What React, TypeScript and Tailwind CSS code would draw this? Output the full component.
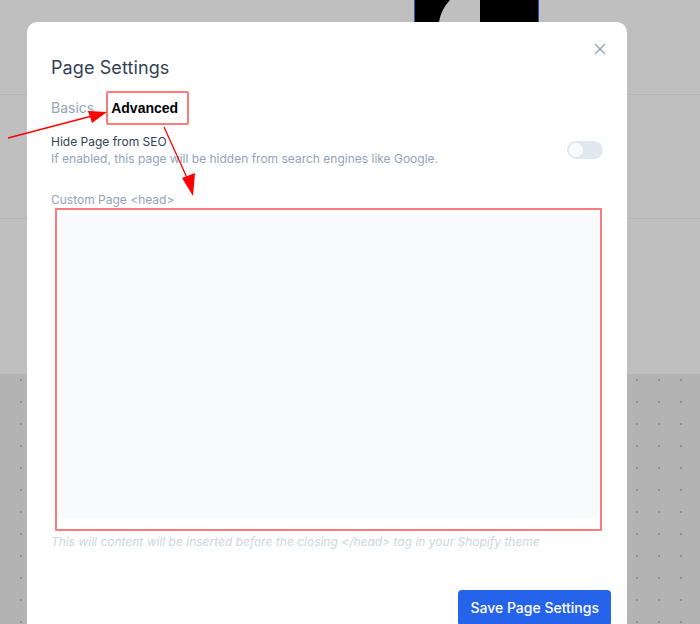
import React from "react";

export default function App() {
  return (
    <div className="relative w-[700px] h-[624px] overflow-hidden bg-[#bfbfbf] font-['Inter',sans-serif]">
      {/* background page */}
      <div className="flex flex-col h-full">
        <div className="h-[95px] shrink-0 border-b border-[#b4b4b4]">
          <div className="ml-[414px] w-[125px] h-[22px] border-x border-[#2f55b8] bg-black">
            <svg width="123" height="22" viewBox="0 0 123 22" className="block">
              <path d="M35,0 A41.5,41.5 0 0 0 24,22 L65,22 L65,0 Z" fill="#bfbfbf" />
            </svg>
          </div>
        </div>
        <div className="h-[124px] shrink-0 border-b border-[#b4b4b4]" />
        <div className="h-[155px] shrink-0" />
        <div className="flex-1 bg-[#b3b3b3] bg-[radial-gradient(circle,#8d8ca8_1px,transparent_1.2px)] bg-[length:22px_22px] bg-[position:10px_-5px]" />
      </div>

      {/* modal */}
      <div className="absolute left-[27px] top-[22px] w-[600px] h-[640px] bg-white rounded-[10px] px-6 pt-8">
        <button className="absolute right-[21px] top-[21px] w-[12px] h-[12px] flex items-center justify-center">
          <svg width="12" height="12" viewBox="0 0 12 12">
            <path d="M1.5 1.5 L10.5 10.5 M10.5 1.5 L1.5 10.5" stroke="#94a3b8" strokeWidth="1.4" strokeLinecap="round" />
          </svg>
        </button>
        <h2 className="text-[18px] leading-[28px] text-[#334155] font-normal tracking-[0.1px]">Page Settings</h2>
        <div className="mt-4 flex items-center gap-[17px] text-[14px] leading-5">
          <span className="text-[#94a3b8]">Basics</span>
          <span className="font-bold text-black font-['Liberation_Sans',sans-serif]">Advanced</span>
        </div>
        <div className="mt-[16px] flex items-start justify-between">
          <div>
            <div className="text-[12px] leading-4 text-[#334155]">Hide Page from SEO</div>
            <div className="text-[12px] leading-[17px] text-[#94a3b8]">
              If enabled, this page will be hidden from search engines like Google.
            </div>
          </div>
          <div className="w-[36px] h-[18px] rounded-full bg-[#e2e8f0] p-[2px] mt-[7px]">
            <div className="w-[14px] h-[14px] rounded-full bg-[#f8fafc]" />
          </div>
        </div>
        <div className="mt-[25px] text-[12px] leading-4 text-[#94a3b8]">Custom Page &lt;head&gt;</div>
        <div className="mt-[8px] w-[547px] h-[302px] bg-[#f8fafc]" />
        <div className="mt-[16px] text-[12px] leading-4 italic text-[#cbd5e1]">
          This will content will be inserted before the closing &lt;/head&gt; tag in your Shopify theme
        </div>
        <div className="mt-[40px] flex justify-end -mr-2">
          <button className="h-9 px-3 rounded-[4px] bg-[#2563eb] text-white text-[14px] font-medium leading-5">
            Save Page Settings
          </button>
        </div>
      </div>

      {/* annotations */}
      <div className="absolute left-[106px] top-[91px] w-[83px] h-[34px] border-2 border-[#fa7b7b] rounded-[2px]" />
      <div className="absolute left-[55px] top-[208px] w-[547px] h-[323px] border-2 border-[#fa7b7b] rounded-[1px]" />
      <svg className="absolute left-0 top-0 pointer-events-none" width="700" height="624" viewBox="0 0 700 624">
        <line x1="8" y1="138" x2="92" y2="116" stroke="#ff0000" strokeWidth="1.3" />
        <polygon points="107,112 88,111 92,123" fill="#ff0000" />
        <line x1="164" y1="127" x2="188" y2="180" stroke="#ff0000" strokeWidth="1.3" />
        <polygon points="193,196 182,178 195,173" fill="#ff0000" />
      </svg>
    </div>
  );
}
